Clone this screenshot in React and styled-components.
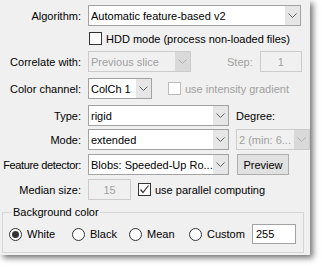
import React from 'react'
import styled, { createGlobalStyle } from 'styled-components'

const Global = createGlobalStyle`
  html, body { margin: 0; padding: 0; background: #ffffff; }
  body { font-family: "Liberation Sans", Arial, sans-serif; font-size: 11px; color: #000; }
`

const Page = styled.div`
  width: 322px;
  height: 269px;
  background: #ffffff;
`

const Panel = styled.div`
  width: 310px;
  height: 255px;
  box-sizing: border-box;
  background: #f0f0f0;
  box-shadow: 3px 3px 6px rgba(0, 0, 0, 0.55);
  overflow: hidden;
  padding-top: 5px;
  display: flex;
  flex-direction: column;
`

const Row = styled.div`
  display: flex;
  align-items: center;
  height: 21px;
  flex: none;
  margin-top: ${p => p.$mt || 0}px;
`

const Label = styled.div`
  width: 81px;
  flex: none;
  margin-right: 7px;
  display: flex;
  justify-content: flex-end;
  white-space: nowrap;
  letter-spacing: ${p => (p.$tight ? '-0.35px' : '0')};
  color: ${p => (p.$off ? '#a0a0a0' : '#000')};
`

const SideLabel = styled.span`
  margin-left: ${p => p.$ml || 0}px;
  white-space: nowrap;
  color: ${p => (p.$off ? '#a0a0a0' : '#000')};
`

const Combo = styled.div`
  width: ${p => p.$w}px;
  height: 21px;
  flex: none;
  box-sizing: border-box;
  display: flex;
  margin-left: ${p => p.$ml || 0}px;
  border: 1px solid ${p => (p.$off ? '#cccccc' : '#a2a2a2')};
  background: ${p => (p.$off ? '#f0f0f0' : '#ffffff')};
  color: ${p => (p.$off ? '#a0a0a0' : '#000')};
`

const ComboValue = styled.div`
  flex: 1;
  min-width: 0;
  padding-left: 2px;
  display: flex;
  align-items: center;
  white-space: nowrap;
  overflow: hidden;
`

const ComboArrow = styled.div`
  width: 15px;
  flex: none;
  display: flex;
  align-items: center;
  justify-content: center;
  background: ${p => (p.$off ? '#d9d9d9' : '#e6e6e6')};
`

const Field = styled.div`
  width: ${p => p.$w}px;
  height: ${p => p.$h || 21}px;
  flex: none;
  box-sizing: border-box;
  margin-left: ${p => p.$ml || 0}px;
  border: 1px solid ${p => (p.$off ? '#cccccc' : '#a2a2a2')};
  background: ${p => (p.$off ? '#f0f0f0' : '#ffffff')};
  color: ${p => (p.$off ? '#a0a0a0' : '#000')};
  display: flex;
  align-items: center;
  justify-content: ${p => (p.$center ? 'center' : 'flex-start')};
  padding-left: ${p => (p.$center ? 0 : 3)}px;
`

const Button = styled.div`
  width: 52px;
  height: 21px;
  flex: none;
  box-sizing: border-box;
  margin-left: 8px;
  border: 1px solid #adadad;
  background: #e1e1e1;
  display: flex;
  align-items: center;
  justify-content: center;
`

const CheckWrap = styled.label`
  display: flex;
  align-items: center;
  gap: 4px;
  margin-left: ${p => p.$ml || 0}px;
  white-space: nowrap;
  color: ${p => (p.$off ? '#a0a0a0' : '#000')};
`

const Box = styled.span`
  width: 13px;
  height: 13px;
  box-sizing: border-box;
  flex: none;
  border: 1px solid ${p => (p.$off ? '#bcbcbc' : '#333333')};
  background: #ffffff;
  display: flex;
  align-items: center;
  justify-content: center;
`

const Group = styled.fieldset`
  margin: 6px 0 0 2px;
  width: 302px;
  box-sizing: border-box;
  padding: 0 0 8px 6px;
  border: 1px solid #d5d5d5;
  min-width: 0;
`

const Legend = styled.legend`
  padding: 0 1px;
  margin-left: 3px;
  line-height: 13px;
  font-size: 11px;
`

const RadioRow = styled.div`
  display: flex;
  align-items: center;
  height: 20px;
  margin-top: 5px;
`

const RadioItem = styled.label`
  width: ${p => p.$w}px;
  flex: none;
  display: flex;
  align-items: center;
  gap: 5px;
`

const Circle = styled.span`
  width: 13px;
  height: 13px;
  box-sizing: border-box;
  border-radius: 50%;
  border: 1px solid #333333;
  background: #ffffff;
  display: flex;
  align-items: center;
  justify-content: center;
  flex: none;
`

const Dot = styled.span`
  width: 7px;
  height: 7px;
  border-radius: 50%;
  background: #333333;
`

const Chevron = ({ off }) => (
  <svg width="9" height="5" viewBox="0 0 9 5">
    <polyline points="0.5,0.5 4.5,4.5 8.5,0.5" fill="none" stroke={off ? '#b0b0b0' : '#606060'} strokeWidth="1" />
  </svg>
)

const Select = ({ w, off, ml, children }) => (
  <Combo $w={w} $off={off} $ml={ml}>
    <ComboValue>{children}</ComboValue>
    <ComboArrow $off={off}><Chevron off={off} /></ComboArrow>
  </Combo>
)

const Check = ({ checked, off, ml, children }) => (
  <CheckWrap $off={off} $ml={ml}>
    <Box $off={off}>
      {checked && (
        <svg width="11" height="11" viewBox="0 0 11 11">
          <polyline points="1.5,5.5 4,8.5 9.5,1.5" fill="none" stroke="#333" strokeWidth="1.2" />
        </svg>
      )}
    </Box>
    {children}
  </CheckWrap>
)

const Radio = ({ w, on, children }) => (
  <RadioItem $w={w}>
    <Circle>{on && <Dot />}</Circle>
    {children}
  </RadioItem>
)

export default function App() {
  return (
    <Page>
      <Global />
      <Panel>
        <Row>
          <Label>Algorithm:</Label>
          <Select w={213}>Automatic feature-based v2</Select>
        </Row>
        <Row $mt={2}>
          <Label />
          <Check ml={1}>HDD mode (process non-loaded files)</Check>
        </Row>
        <Row $mt={2}>
          <Label>Correlate with:</Label>
          <Select w={103} off>Previous slice</Select>
          <SideLabel $ml={36} $off>Step:</SideLabel>
          <Field $w={42} $ml={7} $off $center>1</Field>
        </Row>
        <Row $mt={6}>
          <Label>Color channel:</Label>
          <Select w={64}>ColCh 1</Select>
          <Check ml={16} off>use intensity gradient</Check>
        </Row>
        <Row $mt={6}>
          <Label>Type:</Label>
          <Select w={141}>rigid</Select>
          <SideLabel $ml={7}>Degree:</SideLabel>
        </Row>
        <Row $mt={3}>
          <Label>Mode:</Label>
          <Select w={141}>extended</Select>
          <Select w={74} ml={7} off>2 (min: 6...</Select>
        </Row>
        <Row $mt={4}>
          <Label $tight>Feature detector:</Label>
          <Select w={141}>Blobs: Speeded-Up Ro...</Select>
          <Button>Preview</Button>
        </Row>
        <Row $mt={4}>
          <Label>Median size:</Label>
          <Field $w={43} $off $center>15</Field>
          <Check ml={7} checked>use parallel computing</Check>
        </Row>
        <Group>
          <Legend>Background color</Legend>
          <RadioRow>
            <Radio w={63} on>White</Radio>
            <Radio w={57}>Black</Radio>
            <Radio w={60}>Mean</Radio>
            <Radio w={63}>Custom</Radio>
            <Field $w={44} $h={20}>255</Field>
          </RadioRow>
        </Group>
      </Panel>
    </Page>
  )
}
